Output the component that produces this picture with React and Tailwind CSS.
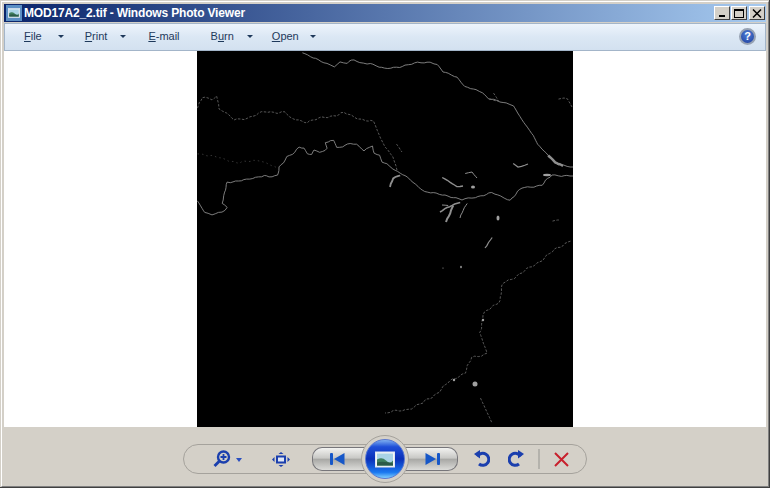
// App.jsx - Windows Photo Viewer window
const fontUi = { fontFamily: '"Liberation Sans", sans-serif' }

const mainRivers = [
  '197,200 205,213 212,215 222,212 227,207 222,203 225,193 227,182 247,180 264,175 269,177 278,176 279,167 287,157 295,153 299,147 304,148 307,153 312,155 314,150 320,153 327,148 325,142 334,141 337,148 350,143 357,145 364,151 372,145 374,153 380,156 382,162 387,164 395,170 408,178 425,192 445,195 462,200 475,197 492,193 510,200 522,188 542,185 552,175 573,176',
  '302,52 324,63 334,66 340,62 347,63 354,60 360,63 370,63 379,67 385,69 402,66 418,63 430,62 437,64 443,72 457,77 465,87 482,92 488,98 500,102 513,105 522,120 533,135 538,145 548,155 558,165 573,167',
]
const dimRivers = [
  '197,107 202,97 212,100 217,97 219,109 225,112 234,120 250,117 265,112 285,112 290,118 307,122 322,118 344,113 357,118 374,122 380,137 385,147 393,157 397,170',
  '570,240 555,250 537,263 522,273 503,283 500,300 483,315 480,333 487,353 472,358 465,372 448,383 432,397 423,403 405,410 385,413',
  '396,143 402,152',
  '493,92 498,100 488,100',
  '558,98 567,98 572,107',
  '552,220 560,220',
  '480,397 486,410 492,423',
]
const faintRivers = ['197,153 220,158 239,163 260,160 277,168']
const thickBranches = [
  ['442,177 450,182 457,187 463,186', 1.4],
  ['465,173 472,172 477,178', 1],
  ['513,163 518,167 528,164', 1.2],
  ['460,202 452,205 440,212', 1.6],
  ['453,205 450,213 446,222', 2],
  ['448,205 442,205', 1],
  ['467,203 463,210 460,218', 1],
  ['400,175 393,178 390,187', 1.8],
  ['492,237 485,248', 1.2],
  ['548,155 555,162 563,166', 2.4],
]
const blobs = [
  [498, 218, 1.5, 2.5],
  [547, 175, 4, 1.2],
  [473, 187, 2, 1.5],
  [475, 384, 2.5, 2.5],
  [454, 380, 1.2, 1.2],
  [461, 267, 0.8, 1.2],
  [443, 268, 0.6, 0.6],
  [483, 320, 1.2, 1.2],
]

// break a polyline into short steps with a small fixed wobble so it reads as a river
function wiggle(points, amp) {
  const pts = points.split(' ').map((p) => p.split(',').map(Number))
  const out = []
  let n = 0
  for (let i = 0; i < pts.length - 1; i++) {
    const [x1, y1] = pts[i]
    const [x2, y2] = pts[i + 1]
    const len = Math.hypot(x2 - x1, y2 - y1)
    const steps = Math.max(1, Math.round(len / 3))
    for (let s = 0; s < steps; s++) {
      const t = s / steps
      n++
      const off = (Math.sin(n * 1.7) + Math.sin(n * 0.6)) * amp
      out.push((x1 + (x2 - x1) * t + off * 0.5).toFixed(1) + ',' + (y1 + (y2 - y1) * t + off).toFixed(1))
    }
  }
  out.push(pts[pts.length - 1].join(','))
  return out.join(' ')
}

function RiverMap() {
  return (
    <svg viewBox="197 51 376 376" className="w-[376px] h-[376px] bg-black block" fill="none">
      {faintRivers.map((p) => (
        <polyline key={p} points={wiggle(p, 0.6)} stroke="#4a4a4a" strokeWidth="0.7" strokeDasharray="1.5 3" />
      ))}
      {dimRivers.map((p) => (
        <polyline key={p} points={wiggle(p, 0.7)} stroke="#6e6e6e" strokeWidth="0.8" strokeDasharray="2.5 1.5" />
      ))}
      {mainRivers.map((p) => (
        <polyline key={p} points={wiggle(p, 0.5)} stroke="#8a8a8a" strokeWidth="0.9" />
      ))}
      {thickBranches.map(([p, w]) => (
        <polyline key={p} points={wiggle(p, 0.3)} stroke="#8f8f8f" strokeWidth={w} />
      ))}
      {blobs.map(([x, y, rx, ry]) => (
        <ellipse key={x + '-' + y} cx={x} cy={y} rx={rx} ry={ry} fill="#a0a0a0" />
      ))}
    </svg>
  )
}

function PictureIcon({ className }) {
  return (
    <svg viewBox="0 0 20 16" className={className}>
      <rect x="0.5" y="0.5" width="19" height="15" fill="#f4f6f8" stroke="#dfe6ee" />
      <rect x="2" y="2" width="16" height="12" fill="#a9d3e6" />
      <path d="M2 8 Q7 5 11 9 T18 9 V14 H2 Z" fill="#3f7f5f" />
      <path d="M2 11 Q8 9 18 12 V14 H2 Z" fill="#2b5a48" />
    </svg>
  )
}

function WinButton({ children }) {
  return (
    <div className="w-4 h-[14px] bg-[#d4d0c8] border-t border-l border-t-white border-l-white border-r border-b border-r-[#404040] border-b-[#404040] flex items-center justify-center">
      {children}
    </div>
  )
}

function MenuItem({ pre = '', u, post, arrow, className = '' }) {
  return (
    <div className={'flex items-center ' + className}>
      <span>
        {pre}
        <span className="underline">{u}</span>
        {post}
      </span>
      {arrow && <span className={'border-x-[3px] border-x-transparent border-t-[3px] border-t-[#1e395b] ' + arrow} />}
    </div>
  )
}

function NavButton({ side, children }) {
  return (
    <div
      className={
        'w-[52px] h-[24px] flex items-center justify-center bg-[linear-gradient(#f2f2f0,#c9c9c6_45%,#a9a9a6_52%,#dcdcd9)] border border-[#77767a] ' +
        (side === 'left' ? 'rounded-l-[10px] border-r-0 pr-[2px]' : 'rounded-r-[10px] border-l-0 pl-[2px]')
      }
    >
      {children}
    </div>
  )
}

export default function App() {
  return (
    <div className="w-[770px] h-[488px] border-r border-b border-r-[#404040] border-b-[#404040] overflow-hidden" style={fontUi}>
      <div className="h-full border-t border-l border-[#d4d0c8]">
        <div className="h-full border-t border-l border-t-white border-l-white border-r border-b border-r-[#808080] border-b-[#808080] bg-[#d4d0c8] p-[2px] flex flex-col">
          {/* title bar */}
          <div className="h-[18px] shrink-0 bg-[linear-gradient(to_right,#0a246a,#a6caf0)] flex items-center pl-[2px] pr-[1px]">
            <div className="w-4 h-4 bg-[#5b8fc4] p-[2px] flex items-center">
              <PictureIcon className="w-3 h-[10px]" />
            </div>
            <span className="ml-[2px] text-white font-bold text-[12px] leading-none tracking-[-0.17px]">
              MOD17A2_2.tif - Windows Photo Viewer
            </span>
            <div className="ml-auto flex">
              <WinButton>
                <span className="w-[6px] h-[2px] bg-black mt-[6px]" />
              </WinButton>
              <div className="ml-[1px]">
                <WinButton>
                  <span className="w-[10px] h-[9px] border border-black border-t-2" />
                </WinButton>
              </div>
              <div className="ml-[2px]">
                <WinButton>
                  <svg viewBox="0 0 10 9" className="w-[10px] h-[9px]">
                    <path d="M1 0.5 L9 8.5 M9 0.5 L1 8.5" stroke="#000" strokeWidth="1.5" />
                  </svg>
                </WinButton>
              </div>
            </div>
          </div>

          {/* menu bar */}
          <div className="h-[28px] mt-[1px] shrink-0 bg-[linear-gradient(#edf4fc,#dbe7f4_50%,#d3e1f0)] border border-[#a3b5c9] flex items-center text-[#1e395b] text-[11px] pl-[19px] pr-[9px] pb-[2px]">
            <MenuItem u="F" post="ile" arrow="ml-[16px]" />
            <MenuItem u="P" post="rint" arrow="ml-[13px]" className="ml-[21px]" />
            <MenuItem u="E" post="-mail" className="ml-[22px]" />
            <MenuItem pre="B" u="u" post="rn" arrow="ml-[13px]" className="ml-[31px]" />
            <MenuItem u="O" post="pen" arrow="ml-[11px]" className="ml-[19px]" />
            <div className="ml-auto w-[17px] h-[17px] rounded-full bg-[radial-gradient(circle_at_50%_35%,#4f7fd6,#1d3c9c)] border-2 border-[#97a2b3] flex items-center justify-center text-white text-[11px] font-bold leading-none">
              ?
            </div>
          </div>

          {/* picture */}
          <div className="h-[376px] shrink-0 bg-white flex justify-center">
            <RiverMap />
          </div>

          {/* controls */}
          <div className="flex-1 flex items-start justify-center pt-[17px]">
            <div className="relative w-[404px] h-[30px] rounded-full border border-[#a5a29c] flex items-center pl-[29px]">
              <svg viewBox="0 0 18 18" className="w-[18px] h-[18px] -mt-[1px]" fill="none">
                <circle cx="10.5" cy="7" r="5.5" stroke="#1b3fae" strokeWidth="2.4" />
                <path d="M7.5 7h6M10.5 4v6" stroke="#1b3fae" strokeWidth="1.8" />
                <path d="M6.5 11 L1.5 16" stroke="#1b3fae" strokeWidth="2.8" />
              </svg>
              <span className="ml-[5px] mt-[1px] border-x-[3.5px] border-x-transparent border-t-4 border-t-[#2a4fc0]" />

              <svg viewBox="0 0 18 15" className="ml-[30px] w-[18px] h-[15px]">
                <path d="M9 0 L11.5 2 H6.5 Z M9 15 L6.5 13 H11.5 Z M0 7.5 L2.5 5 V10 Z M18 7.5 L15.5 10 V5 Z" fill="#1b3fae" />
                <rect x="5" y="4.5" width="8" height="6" fill="#dfe6f4" stroke="#1b3fae" strokeWidth="2" />
              </svg>

              <div className="ml-[22px] flex items-center">
                <NavButton side="left">
                  <svg viewBox="0 0 15 12" className="w-[15px] h-3">
                    <rect x="0" y="0" width="3" height="12" rx="1" fill="#1657c8" />
                    <path d="M14.5 0 V12 L4 6 Z" fill="#1657c8" />
                  </svg>
                </NavButton>
                <div className="relative z-10 -mx-[3px] w-[48px] h-[48px] -my-[10px] rounded-full bg-[#d4d0c8] border border-[#a5a29c] p-[3px] shrink-0">
                  <div className="w-full h-full rounded-full bg-[linear-gradient(#7fb0f0_0%,#1f4fd8_18%,#0a2fb8_50%,#1a78f0_85%,#7fd0ff_100%)] flex items-center justify-center border border-[#5a78d0]">
                    <PictureIcon className="w-[20px] h-[17px]" />
                  </div>
                </div>
                <NavButton side="right">
                  <svg viewBox="0 0 15 12" className="w-[15px] h-3">
                    <path d="M0.5 0 V12 L11 6 Z" fill="#1657c8" />
                    <rect x="12" y="0" width="3" height="12" rx="1" fill="#1657c8" />
                  </svg>
                </NavButton>
              </div>

              <svg viewBox="0 0 16 18" className="ml-[16px] w-4 h-[18px]" fill="none">
                <path d="M3.5 7 A6 6 0 1 1 5 14.5" stroke="#1b3fae" strokeWidth="3" transform="translate(0 -0.5)" />
                <path d="M6 0 V8.5 L0 4 Z" fill="#1b3fae" />
              </svg>
              <svg viewBox="0 0 16 18" className="ml-[18px] w-4 h-[18px]" fill="none">
                <path d="M12.5 7 A6 6 0 1 0 11 14.5" stroke="#1b3fae" strokeWidth="3" transform="translate(0 -0.5)" />
                <path d="M10 0 V8.5 L16 4 Z" fill="#1b3fae" />
              </svg>

              <span className="ml-[14px] w-[2px] h-[20px] bg-[#b4b2ac]" />

              <svg viewBox="0 0 15 15" className="ml-[14px] w-[15px] h-[15px]">
                <path d="M1 1 L14 14 M14 1 L1 14" stroke="#c8202c" strokeWidth="2" />
              </svg>
            </div>
          </div>
        </div>
      </div>
    </div>
  )
}
